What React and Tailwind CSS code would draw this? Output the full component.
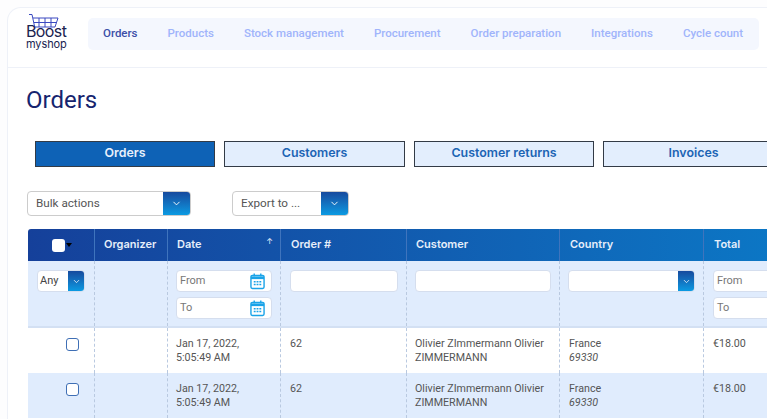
import React from "react";
import { ChevronDown } from "lucide-react";

const nav = ["Orders", "Products", "Stock management", "Procurement", "Order preparation", "Integrations", "Cycle count"];
const tabs = ["Orders", "Customers", "Customer returns", "Invoices"];
const cols = "grid grid-cols-[66px_73px_113px_126px_153px_144px_90px]";
const cell = "border-l border-dashed border-[#b9c9e0]";
const input = "h-[22px] rounded-[4px] border border-[#d5deee] bg-white text-[11px] text-[#777] pl-[3px] pr-[6px] flex items-center justify-between";

function Logo() {
  return (
    <div className="relative w-[44px] h-[32px] shrink-0 text-[#1a2350] font-['Inter',sans-serif]">
      <svg className="absolute left-[4px] top-[-4px]" width="30" height="15" viewBox="0 0 30 15" fill="none" stroke="#3a49c0" strokeWidth="1">
        <path d="M0 .5h3l3 14" />
        <path d="M4 4h25l-3 9H6M10 4v9M16 4v9M22 4v9M5 8.500h23" />
      </svg>
      <div className="absolute left-[1px] top-[7px] text-[16px] leading-[12px] tracking-[-0.6px]">Boost</div>
      <div className="absolute left-[1px] top-[20px] text-[11px] leading-[12px] tracking-[-0.1px]">myshop</div>
    </div>
  );
}

function Calendar() {
  return (
    <svg width="15" height="18" viewBox="0 0 16 18" fill="none">
      <rect x="1" y="3" width="14" height="14" rx="1.500" stroke="#1aa3e8" strokeWidth="1.500" />
      <path d="M1 4h14v3H1z" fill="#1aa3e8" />
      <path d="M4.500 1v3M11.500 1v3" stroke="#1aa3e8" strokeWidth="1.500" />
      <path d="M4 9h2v1.500H4zM7 9h2v1.500H7zM10 9h2v1.500h-2zM4 12h2v1.500H4zM7 12h2v1.500H7zM10 12h2v1.500h-2z" fill="#1aa3e8" />
    </svg>
  );
}

function SelectBox({ label, className }) {
  return (
    <div className={"h-[25px] flex rounded-[4px] border border-[#ccc] bg-white overflow-hidden " + className}>
      <div className="flex-1 pl-2 text-[11.7px] leading-[23px] text-[#555]">{label}</div>
      <div className="w-[27px] flex items-center justify-center bg-gradient-to-b from-[#164a9e] to-[#0a9ae2]">
        <ChevronDown size={11} color="white" />
      </div>
    </div>
  );
}

function DateInput({ label, icon }) {
  return (
    <div className={input}>
      <span>{label}</span>
      {icon && <Calendar />}
    </div>
  );
}

function Row({ alt }) {
  return (
    <div className={cols + " h-[45px] text-[10.7px] leading-[14px] text-[#555] " + (alt ? "bg-[#e0ecfd]" : "bg-white")}>
      <div className="flex justify-center items-start pt-[10px] pl-[23px]">
        <div className="w-[13px] h-[13px] rounded-[3px] border border-[#3f6fb5] bg-white"></div>
      </div>
      <div className={cell}></div>
      <div className={cell + " pl-[8px] pt-[9px]"}>Jan 17, 2022,<br />5:05:49 AM</div>
      <div className={cell + " pl-[9px] pt-[9px]"}>62</div>
      <div className={cell + " pl-[8px] pt-[9px]"}>Olivier ZImmermann Olivier<br />ZIMMERMANN</div>
      <div className={cell + " pl-[9px] pt-[9px]"}>France<br /><i>69330</i></div>
      <div className={cell + " pl-[9px] pt-[9px]"}>€18.00</div>
    </div>
  );
}

export default function App() {
  return (
    <div className="w-[767px] h-[419px] overflow-hidden bg-[#fdfdfe] pl-[7px] pt-[7px] font-['Roboto',sans-serif]">
      <div className="w-[800px] h-[420px] bg-white border-l border-t border-[#eef1f8] rounded-tl-[14px]">
        <div className="h-[60px] border-b border-[#eef1f8] flex items-start pl-[17px] pt-[10px] gap-[19px]">
          <Logo />
          <div className="w-[671px] h-[32px] rounded-[5px] bg-[#f4f7fe] flex items-center pl-[15px] gap-[30px] text-[11.5px] font-medium text-[#a0b4fb] whitespace-nowrap">
            {nav.map((n, i) => (
              <span key={n} className={i === 0 ? "text-[#3c4fa8]" : ""}>{n}</span>
            ))}
          </div>
        </div>

        <h1 className="pl-[18px] pt-[18px] text-[24px] leading-[28px] text-[#16246e]">Orders</h1>

        <div className="flex pl-[26.8px] pt-[27px] gap-[9px] font-['Inter',sans-serif] text-[12.4px] font-semibold">
          {tabs.map((t, i) => (
            <div key={t} className={"w-[180.5px] h-[26px] pb-[1px] border border-[#333b46] flex items-center justify-center " + (i === 0 ? "bg-[#0e62b6] text-[#e8f0fb]" : "bg-[#e3eefd] text-[#1c64b4]")}>{t}</div>
          ))}
        </div>

        <div className="flex pl-[19px] pt-[24px] gap-[41px]">
          <SelectBox label="Bulk actions" className="w-[164px]" />
          <SelectBox label="Export to ..." className="w-[117px]" />
        </div>

        <div className="ml-[20px] mt-[13px] w-[765px] rounded-t-[3px] overflow-hidden">
          <div className={cols + " h-[32px] bg-gradient-to-r from-[#15409a] to-[#0b78c6] text-[11px] font-semibold text-[#e6eefa] font-['Inter',sans-serif] leading-[30px]"}>
            <div className="flex items-center justify-center gap-[1px] pl-[2px]">
              <div className="w-[13px] h-[13px] rounded-[3px] bg-white"></div>
              <div className="w-0 h-0 border-x-[3px] border-x-transparent border-t-[4px] border-t-black"></div>
            </div>
            <div className="border-l border-[#3f74bd] pl-[9px]">Organizer</div>
            <div className="border-l border-[#3f74bd] pl-[9px] flex justify-between pr-[7px]">
              <span>Date</span><span className="text-[8px] leading-[24px] font-normal">↑</span>
            </div>
            <div className="border-l border-[#3f74bd] pl-[10px]">Order #</div>
            <div className="border-l border-[#3f74bd] pl-[9px]">Customer</div>
            <div className="border-l border-[#3f74bd] pl-[10px]">Country</div>
            <div className="border-l border-[#3f74bd] pl-[10px]">Total</div>
          </div>
          <div className={cols + " h-[67px] bg-[#e0ecfd] border-b-2 border-[#d3e0f3]"}>
            <div className="pl-[9px] pt-[9px]">
              <div className="w-[48px] h-[22px] flex rounded-[4px] border border-[#d5deee] bg-white overflow-hidden text-[11px] text-[#444]">
                <div className="flex-1 pl-[2px] leading-[20px]">Any</div>
                <div className="w-[16px] flex items-center justify-center bg-gradient-to-b from-[#164a9e] to-[#0a9ae2]">
                  <ChevronDown size={9} color="white" />
                </div>
              </div>
            </div>
            <div className={cell}></div>
            <div className={cell + " px-[8px] pt-[9px] flex flex-col gap-[5px]"}>
              <DateInput label="From" icon />
              <DateInput label="To" icon />
            </div>
            <div className={cell + " pl-[9px] pr-[8px] pt-[9px]"}>
              <div className={input}></div>
            </div>
            <div className={cell + " px-[8px] pt-[9px]"}>
              <div className={input}></div>
            </div>
            <div className={cell + " px-[8px] pt-[9px]"}>
              <div className="h-[22px] flex rounded-[4px] border border-[#d5deee] bg-white overflow-hidden">
                <div className="flex-1"></div>
                <div className="w-[16px] flex items-center justify-center bg-gradient-to-b from-[#164a9e] to-[#0a9ae2]">
                  <ChevronDown size={9} color="white" />
                </div>
              </div>
            </div>
            <div className={cell + " pl-[9px] pt-[9px] flex flex-col gap-[5px]"}>
              <DateInput label="From" />
              <DateInput label="To" />
            </div>
          </div>
          <Row />
          <Row alt />
        </div>
      </div>
    </div>
  );
}
